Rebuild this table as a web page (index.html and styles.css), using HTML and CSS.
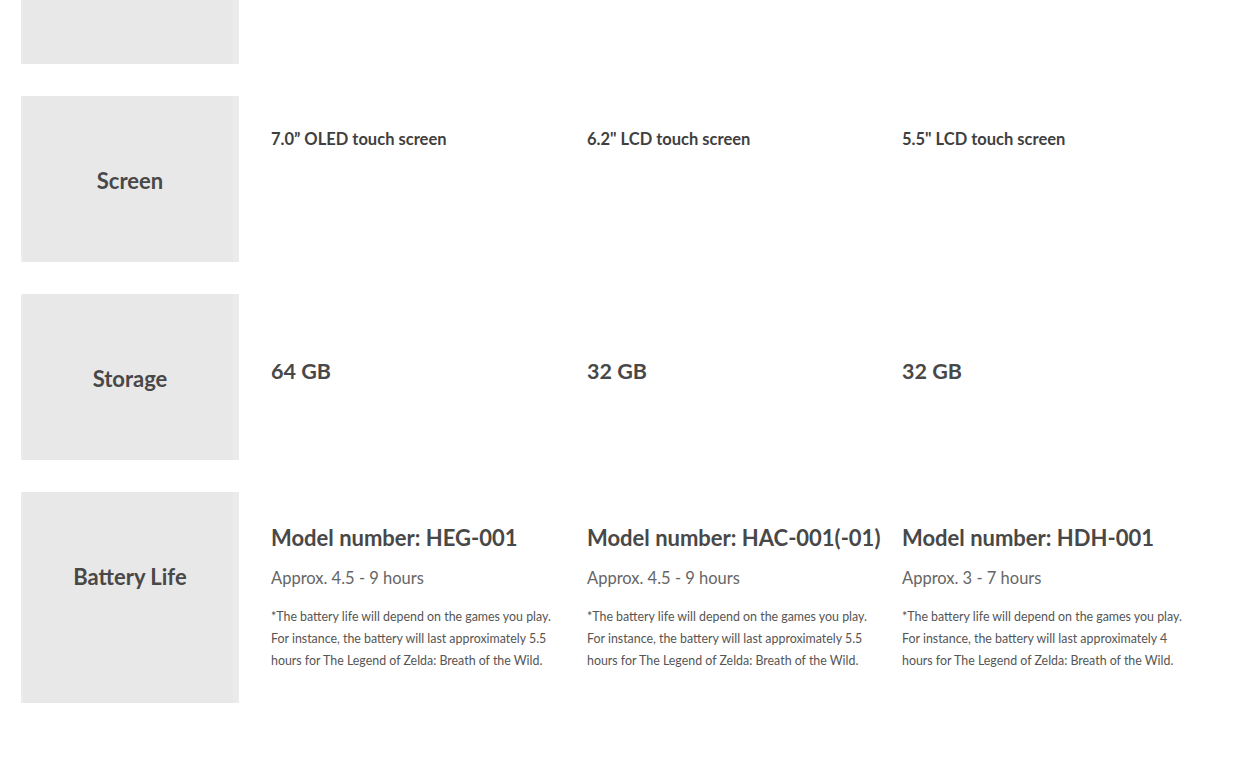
FILE: index.html
```html
<!DOCTYPE html>
<html lang="en">
<head>
<meta charset="utf-8">
<title>Compare</title>
<link rel="stylesheet" href="styles.css">
</head>
<body>
<div class="table">
  <div class="row row-top">
    <div class="label"></div>
    <div class="cells"></div>
  </div>
  <div class="row row-screen">
    <div class="label">Screen</div>
    <div class="cells">
      <div class="cell"><p class="screen">7.0” OLED touch screen</p></div>
      <div class="cell"><p class="screen">6.2" LCD touch screen</p></div>
      <div class="cell"><p class="screen">5.5" LCD touch screen</p></div>
    </div>
  </div>
  <div class="row row-storage">
    <div class="label">Storage</div>
    <div class="cells">
      <div class="cell"><p class="big">64 GB</p></div>
      <div class="cell"><p class="big">32 GB</p></div>
      <div class="cell"><p class="big">32 GB</p></div>
    </div>
  </div>
  <div class="row row-battery">
    <div class="label">Battery Life</div>
    <div class="cells">
      <div class="cell">
        <h3 class="model">Model number: HEG-001</h3>
        <p class="approx">Approx. 4.5 - 9 hours</p>
        <p class="note">*The battery life will depend on the games you play. For instance, the battery will last approximately 5.5 hours for The Legend of Zelda: Breath of the Wild.</p>
      </div>
      <div class="cell">
        <h3 class="model">Model number: HAC-001(-01)</h3>
        <p class="approx">Approx. 4.5 - 9 hours</p>
        <p class="note">*The battery life will depend on the games you play. For instance, the battery will last approximately 5.5 hours for The Legend of Zelda: Breath of the Wild.</p>
      </div>
      <div class="cell">
        <h3 class="model">Model number: HDH-001</h3>
        <p class="approx">Approx. 3 - 7 hours</p>
        <p class="note">*The battery life will depend on the games you play. For instance, the battery will last approximately 4 hours for The Legend of Zelda: Breath of the Wild.</p>
      </div>
    </div>
  </div>
</div>
</body>
</html>
```

FILE: styles.css
```css
* { box-sizing: border-box; }
html, body { margin: 0; padding: 0; background: #fff; }
body {
  font-family: Lato, "Open Sans", "Liberation Sans", sans-serif;
  color: #484848;
  overflow: hidden;
  height: 765px;
}
.table {
  padding: 0 32px 0 21px;
  display: flex;
  flex-direction: column;
  gap: 32px;
}
.row {
  display: grid;
  grid-template-columns: 218px 1fr;
  column-gap: 32px;
}
.label {
  background: #e8e8e8;
  box-shadow: inset 2px 0 0 #ececec, inset -6px 0 0 #ebebeb;
  min-height: 166px;
  text-align: center;
  font-size: 22px;
  font-weight: 700;
  line-height: 26px;
  padding-top: 72px;
  color: #484848;
}
.row-top { margin-top: -102px; }
.cells {
  display: grid;
  grid-template-columns: 316px 315px 1fr;
}
.cell { padding-right: 20px; }
p, h3 { margin: 0; }
.screen {
  font-size: 16.5px;
  font-weight: 700;
  line-height: 20px;
  padding-top: 33px;
  color: #3f3f3f;
}
.big {
  font-size: 21.5px;
  font-weight: 700;
  line-height: 26px;
  padding-top: 64px;
  color: #484848;
}
.model {
  font-size: 22px;
  font-weight: 700;
  line-height: 28px;
  padding-top: 32px;
  white-space: nowrap;
  color: #484848;
}
.approx {
  font-size: 16.5px;
  font-weight: 400;
  line-height: 20px;
  margin-top: 16px;
  color: #666;
}
.note {
  max-width: 292px;
  font-size: 12.4px;
  font-weight: 400;
  line-height: 22px;
  margin-top: 18px;
  color: #555;
  padding-bottom: 31px;
}
```
